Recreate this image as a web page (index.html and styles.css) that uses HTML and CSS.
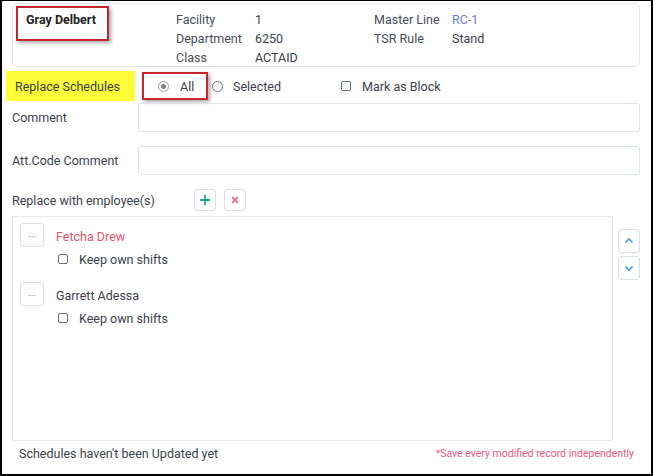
FILE: index.html
```html
<!DOCTYPE html>
<html>
<head>
<meta charset="utf-8">
<link rel="stylesheet" href="styles.css">
</head>
<body>
<div class="frame">
  <div class="card">
    <div class="name">Gray Delbert</div>
    <div class="lbl">Facility</div><div class="val">1</div>
    <div class="lbl">Master Line</div><div class="val link">RC-1</div>
    <div class="lbl c2">Department</div><div class="val">6250</div>
    <div class="lbl">TSR Rule</div><div class="val">Stand</div>
    <div class="lbl c2">Class</div><div class="val">ACTAID</div>
    <span class="annot name-annot"></span>
  </div>

  <div class="opt-row">
    <div class="hl">Replace Schedules</div>
    <label class="radio boxed"><span class="rb on"></span>All</label>
    <label class="radio"><span class="rb"></span>Selected</label>
    <label class="check mark"><span class="cb"></span>Mark as Block</label>
  </div>

  <div class="field">
    <div class="flabel">Comment</div>
    <div class="input"></div>
  </div>
  <div class="field f2">
    <div class="flabel">Att.Code Comment</div>
    <div class="input"></div>
  </div>

  <div class="rep-row">
    <div class="rlabel">Replace with employee(s)</div>
    <button class="ibtn"><svg width="12" height="12" viewBox="0 0 12 12"><path d="M6 1v10M1 6h10" stroke="#1fa695" stroke-width="1.8"/></svg></button>
    <button class="ibtn"><svg width="10" height="10" viewBox="0 0 10 10"><path d="M2 2l6 6M8 2l-6 6" stroke="#ec5a72" stroke-width="1.6"/></svg></button>
  </div>

  <div class="list-wrap">
    <div class="list">
      <div class="emp">
        <button class="dots">...</button>
        <div class="emp-body">
          <div class="ename red">Fetcha Drew</div>
          <label class="check"><span class="cb"></span>Keep own shifts</label>
        </div>
      </div>
      <div class="emp">
        <button class="dots">...</button>
        <div class="emp-body">
          <div class="ename">Garrett Adessa</div>
          <label class="check"><span class="cb"></span>Keep own shifts</label>
        </div>
      </div>
    </div>
    <div class="arrows">
      <button class="abtn"><svg width="10" height="8" viewBox="0 0 10 8"><path d="M1.5 5.5L5 2l3.5 3.5" fill="none" stroke="#4a9fe6" stroke-width="1.6"/></svg></button>
      <button class="abtn"><svg width="10" height="8" viewBox="0 0 10 8"><path d="M1.5 2.5L5 6l3.5-3.5" fill="none" stroke="#4a9fe6" stroke-width="1.6"/></svg></button>
    </div>
  </div>

  <div class="footer">
    <span>Schedules haven't been Updated yet</span>
    <span class="note">*Save every modified record independently</span>
  </div>
</div>
</body>
</html>
```

FILE: styles.css
```css
* { box-sizing: border-box; }
html, body { margin: 0; padding: 0; background: #fff; }
body {
  font-family: Roboto, "Liberation Sans", sans-serif;
  font-size: 12.5px;
  color: #3a3f4b;
}
.frame {
  width: 653px;
  height: 476px;
  border: 2px solid #000;
  border-top-width: 1px;
  padding: 2px 11px 0 10px;
  display: flex;
  flex-direction: column;
}
.card {
  position: relative;
  height: 64px;
  border: 1px solid #e1e4e8;
  border-radius: 6px;
  padding: 6px 0 0 13px;
  display: grid;
  grid-template-columns: 150px 79px 119px 78px 1fr;
  grid-auto-rows: 19px;
  line-height: 19px;
}
.name { font-weight: bold; color: #222; }
.c2 { grid-column: 2; }
.lbl { color: #464c58; }
.val { color: #3a3f4b; }
.link { color: #6c7bd8; }
.annot {
  position: absolute;
  border: 2px solid #c5262c;
  box-shadow: 2px 2px 4px rgba(0,0,0,0.35);
}
.name-annot { left: 3px; top: 2px; width: 93px; height: 35px; }

.opt-row {
  display: flex;
  align-items: center;
  height: 30px;
  margin: 4px 0 0 -6px;
}
.hl {
  background: #fdfd3a;
  width: 129px;
  height: 30px;
  line-height: 31px;
  padding-left: 9px;
  color: #3a3f4a;
}
.radio, .check {
  display: flex;
  align-items: center;
  color: #3a3f4b;
}
.radio.boxed {
  margin-left: 7px;
  width: 66px;
  height: 28px;
  border: 2px solid #c5262c;
  box-shadow: 2px 2px 4px rgba(0,0,0,0.35);
  padding-left: 14px;
}
.rb {
  width: 11px;
  height: 11px;
  border: 1px solid #6b6f78;
  border-radius: 50%;
  margin-right: 11px;
  position: relative;
}
.rb.on { border-color: #9a9ea6; }
.rb.on::after {
  content: "";
  position: absolute;
  left: 2px; top: 2px;
  width: 5px; height: 5px;
  border-radius: 50%;
  background: #7d8189;
}
.radio.boxed + .radio { margin-left: 4px; }
.radio.boxed + .radio .rb { margin-right: 10px; }
.cb {
  width: 10px;
  height: 10px;
  border: 1px solid #6b6f78;
  border-radius: 2px;
  margin-right: 11px;
}
.mark { margin-left: 60px; }

.field {
  display: flex;
  align-items: center;
  margin-top: 2px;
}
.field.f2 { margin-top: 14px; }
.flabel { width: 126px; }
.input {
  flex: 1;
  height: 29px;
  border: 1px solid #dfe2e6;
  border-radius: 3px;
}

.rep-row {
  display: flex;
  align-items: center;
  margin-top: 14px;
  height: 22px;
}
.rlabel { width: 182px; }
button { font-family: inherit; }
.ibtn {
  width: 22px;
  height: 22px;
  padding: 0;
  border: 1px solid #dcdfe4;
  border-radius: 3px;
  background: #fff;
  display: flex;
  align-items: center;
  justify-content: center;
  margin-right: 8px;
}
.list-wrap {
  display: flex;
  margin-top: 5px;
  height: 225px;
}
.list {
  width: 601px;
  border: 1px solid #e6e8eb;
  border-radius: 1px;
  padding: 6px 0 0 7px;
}
.emp { display: flex; margin-bottom: 16px; }
.dots {
  width: 24px;
  height: 24px;
  padding: 0 0 3px;
  border: 1px solid #dcdfe4;
  border-radius: 3px;
  background: #fff;
  color: #8a8d93;
  font-size: 10px;
  line-height: 16px;
  margin-right: 12px;
}
.emp-body { padding-top: 5px; }
.ename { line-height: 17px; }
.ename.red { color: #e9546a; }
.emp-body .check { margin: 7px 0 0 2px; height: 14px; }
.arrows {
  display: flex;
  flex-direction: column;
  gap: 3px;
  margin: 13px 0 0 5px;
}
.abtn {
  width: 22px;
  height: 24px;
  padding: 0;
  border: 1px solid #dcdfe4;
  border-radius: 3px;
  background: #fff;
  display: flex;
  align-items: center;
  justify-content: center;
}
.footer {
  display: flex;
  justify-content: space-between;
  align-items: center;
  padding: 4px 6px 0 7px;
  height: 20px;
}
.note { color: #f05a7a; font-size: 10.5px; }
```
